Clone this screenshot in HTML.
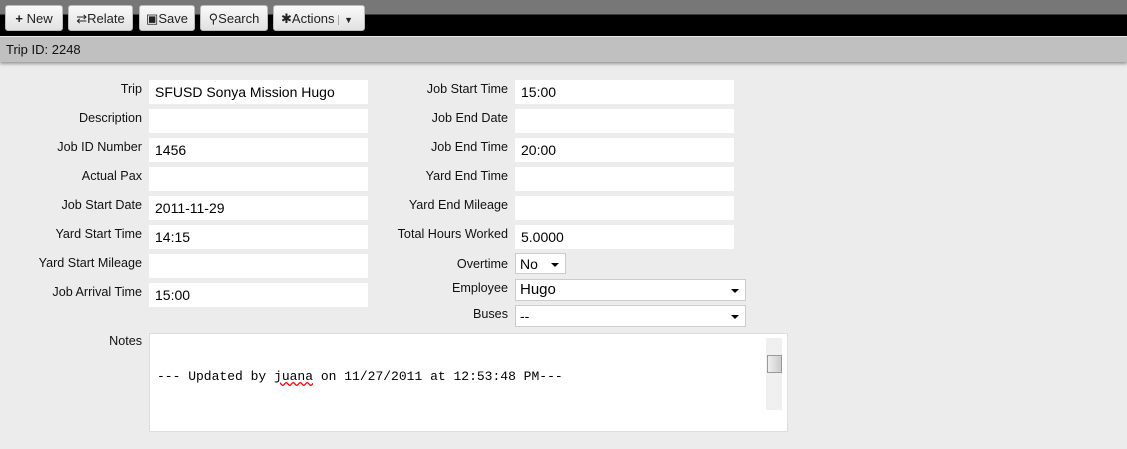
<!DOCTYPE html>
<html><head><style>
body{margin:0;width:1127px;height:449px;background:#ececec;font-family:"Liberation Sans",sans-serif;position:relative;overflow:hidden}
.top{position:absolute;left:0;top:0;width:1127px;height:36px;background:linear-gradient(#777 0,#777 14px,#000 15px,#000 36px)}
.btn{position:absolute;top:5px;height:26px;border:1px solid #bbb;border-radius:3px;background:linear-gradient(#fafafa,#e2e2e2);font-size:13px;line-height:26px;color:#222;box-sizing:border-box;text-align:center}
.hdr{position:absolute;left:0;top:37px;width:1127px;height:25px;background:#c0c0c0;font-size:13px;line-height:25px;padding-left:6px;box-sizing:border-box;color:#111;box-shadow:0 2px 3px #999}
.lbl{position:absolute;font-size:12.6px;color:#111;text-align:right}
.in{position:absolute;background:#fff;height:24px;width:219px;font-size:14px;line-height:24px;padding-left:6px;box-sizing:border-box;color:#000}
.sel{position:absolute;background:#fff;border:1px solid #ccc;box-sizing:border-box;font-size:14px;line-height:20px;padding-left:4px}
.sel:after{content:"";position:absolute;right:6px;top:9px;border:4px solid transparent;border-top:4px solid #000;border-bottom:0}
</style></head><body>
<div class="top"></div>
<div class="btn" style="left:5px;width:58px"><b>+</b> New</div>
<div class="btn" style="left:68px;width:65px">⇄Relate</div>
<div class="btn" style="left:139px;width:56px">▣Save</div>
<div class="btn" style="left:200px;width:68px">⚲Search</div>
<div class="btn" style="left:273px;width:92px;text-align:left;padding-left:7px">✱Actions <span style="border-left:1px solid #aaa;padding-left:5px;font-size:9px">▼</span></div>
<div class="hdr">Trip ID: 2248</div>

<div class="lbl" style="left:0;width:142px;top:82px">Trip</div><div class="in" style="left:149px;top:80px">SFUSD Sonya Mission Hugo</div>
<div class="lbl" style="left:0;width:142px;top:111px">Description</div><div class="in" style="left:149px;top:109px"></div>
<div class="lbl" style="left:0;width:142px;top:140px">Job ID Number</div><div class="in" style="left:149px;top:138px">1456</div>
<div class="lbl" style="left:0;width:142px;top:169px">Actual Pax</div><div class="in" style="left:149px;top:167px"></div>
<div class="lbl" style="left:0;width:142px;top:198px">Job Start Date</div><div class="in" style="left:149px;top:196px">2011-11-29</div>
<div class="lbl" style="left:0;width:142px;top:227px">Yard Start Time</div><div class="in" style="left:149px;top:225px">14:15</div>
<div class="lbl" style="left:0;width:142px;top:256px">Yard Start Mileage</div><div class="in" style="left:149px;top:254px"></div>
<div class="lbl" style="left:0;width:142px;top:285px">Job Arrival Time</div><div class="in" style="left:149px;top:283px">15:00</div>

<div class="lbl" style="left:300px;width:208px;top:82px">Job Start Time</div><div class="in" style="left:515px;top:80px">15:00</div>
<div class="lbl" style="left:300px;width:208px;top:111px">Job End Date</div><div class="in" style="left:515px;top:109px"></div>
<div class="lbl" style="left:300px;width:208px;top:140px">Job End Time</div><div class="in" style="left:515px;top:138px">20:00</div>
<div class="lbl" style="left:300px;width:208px;top:169px">Yard End Time</div><div class="in" style="left:515px;top:167px"></div>
<div class="lbl" style="left:300px;width:208px;top:198px">Yard End Mileage</div><div class="in" style="left:515px;top:196px"></div>
<div class="lbl" style="left:300px;width:208px;top:227px">Total Hours Worked</div><div class="in" style="left:515px;top:225px">5.0000</div>
<div class="lbl" style="left:300px;width:208px;top:257px">Overtime</div><div class="sel" style="left:515px;top:253px;width:51px;height:21px">No</div>
<div class="lbl" style="left:300px;width:208px;top:281px">Employee</div><div class="sel" style="left:515px;top:279px;width:231px;height:22px;font-size:15px">Hugo</div>
<div class="lbl" style="left:300px;width:208px;top:307px">Buses</div><div class="sel" style="left:515px;top:305px;width:231px;height:22px">--</div>

<div class="lbl" style="left:0;width:142px;top:334px">Notes</div>
<div style="position:absolute;left:149px;top:333px;width:639px;height:99px;background:#fff;border:1px solid #ddd;box-sizing:border-box">
<div style="position:absolute;left:7px;top:35px;font-family:'Liberation Mono',monospace;font-size:13px">--- Updated by <span style="text-decoration:underline wavy red">juana</span> on 11/27/2011 at 12:53:48 PM---</div>
<div style="position:absolute;right:5px;top:4px;width:16px;height:72px;background:#f0f0f0"><div style="position:absolute;top:17px;left:1px;width:13px;height:16px;border:1px solid #999;background:linear-gradient(90deg,#eee,#ccc)"></div></div>
</div>
</body></html>
